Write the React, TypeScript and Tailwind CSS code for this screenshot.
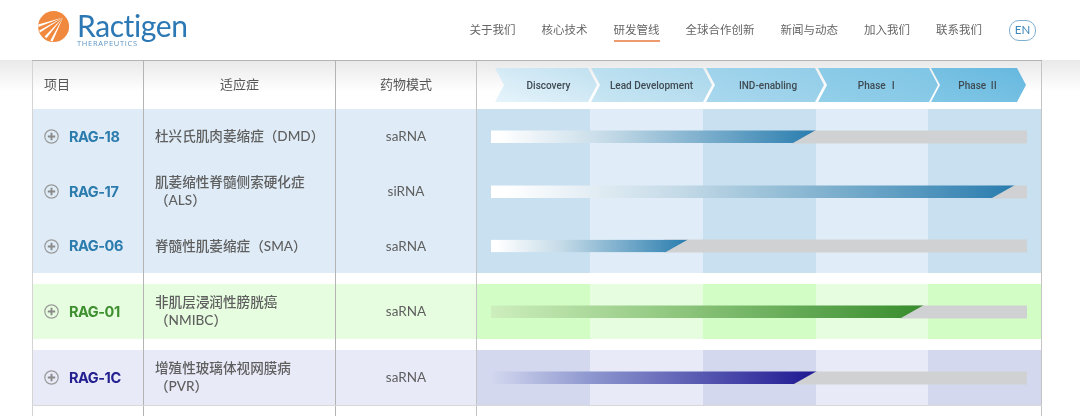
import React from "react";

const cjk = "font-['Lato','Noto_Sans_CJK_SC',sans-serif]";

function Logo() {
  return (
    <svg width="32" height="32" viewBox="0 0 32 32" className="shrink-0">
      <circle cx="15.6" cy="15.6" r="15.5" fill="#f0883e" />
      <path d="M25 6.5 L0.2 13.6 L0.3 16 Z" fill="#fff" />
      <path d="M25 6.5 L1.2 19.4 L2 21.6 Z" fill="#fff" />
      <path d="M25 6.5 L6.6 25.6 L8.4 27.2 Z" fill="#fff" />
      <path d="M25 6.5 L12.4 29.6 L14.6 30.6 Z" fill="#fff" />
    </svg>
  );
}

function PlusIcon() {
  return (
    <svg width="15" height="15" viewBox="0 0 15 15" className="shrink-0">
      <circle cx="7.5" cy="7.5" r="6.7" fill="none" stroke="#9a9a9a" strokeWidth="1.2" />
      <path d="M7.5 3.8V11.2M3.8 7.5H11.2" stroke="#8a8a8a" strokeWidth="1.9" />
    </svg>
  );
}

const navItems = ["关于我们", "核心技术", "研发管线", "全球合作创新", "新闻与动态", "加入我们", "联系我们"];

function Header() {
  return (
    <header className="relative z-10 flex h-[60px] items-center justify-between bg-white pl-[38px] pr-[44px]">
      <div className="flex -translate-y-[1px] items-start gap-[7px]">
        <Logo />
        <div className="flex flex-col">
          <span className="h-[28px] text-[30px] leading-[28px] tracking-[-0.4px] text-[#2b78b5] font-['Lato',sans-serif]">Ractigen</span>
          <span className="text-[7.5px] leading-[8px] tracking-[0.7px] text-[#5d93c4] font-['Open_Sans',sans-serif]">THERAPEUTICS</span>
        </div>
      </div>
      <nav className="flex items-center gap-[26px] text-[11.5px] text-[#666] font-['Noto_Sans_CJK_SC',sans-serif]">
        {navItems.map((n) => (
          <span key={n} className={n === "研发管线" ? "flex h-[22px] translate-y-[1px] items-center border-b-2 border-[#ee9a6f]" : "flex h-[22px] items-center"}>
            {n}
          </span>
        ))}
        <span className="ml-[1px] flex h-[21px] w-[27px] items-center justify-center rounded-[10px] border border-[#7fb0d2] text-[11.5px] text-[#3d86b8] font-['Lato',sans-serif]">EN</span>
      </nav>
    </header>
  );
}

const stages = [
  { label: "Discovery", cls: "w-[102px] pl-[5px] bg-[linear-gradient(20deg,#e6f4fb,#c0e0f0)]", clip: "[clip-path:polygon(0_0,93px_0,100%_50%,93px_100%,0_100%,9px_50%)]" },
  { label: "Lead Development", cls: "w-[121px] -ml-[6px] bg-[linear-gradient(20deg,#c9e6f3,#a9d7ec)]", clip: "[clip-path:polygon(0_0,112px_0,100%_50%,112px_100%,0_100%,9px_50%)]" },
  { label: "IND-enabling", cls: "w-[118px] -ml-[6px] pl-[6px] bg-[linear-gradient(20deg,#a9d8ee,#92cde8)]", clip: "[clip-path:polygon(0_0,109px_0,100%_50%,109px_100%,0_100%,9px_50%)]" },
  { label: "Phase Ⅰ", cls: "w-[120px] -ml-[6px] bg-[linear-gradient(20deg,#93cfe9,#7fc5e5)]", clip: "[clip-path:polygon(0_0,111px_0,100%_50%,111px_100%,0_100%,9px_50%)]" },
  { label: "Phase Ⅱ", cls: "w-[95px] -ml-[7px] pt-[1px] bg-[linear-gradient(20deg,#82c7e6,#66b8df)]", clip: "[clip-path:polygon(0_0,86px_0,100%_50%,86px_100%,0_100%,9px_50%)]" },
];

const cols = "grid-cols-[111px_192px_141px_566px]";

function HeadCells() {
  return (
    <div className={`grid h-[49px] ${cols} border-t border-[#b4b4b4] text-[13px] text-[#555] ${cjk}`}>
      <div className="flex items-center border-l border-[#d4d4d4] pl-[11px]">项目</div>
      <div className="flex items-center justify-center border-l border-[#b4b4b4]">适应症</div>
      <div className="flex items-center justify-center border-l border-[#b4b4b4]">药物模式</div>
      <div className="flex items-center border-x border-[#c4c4c4] pl-[18px]">
        {stages.map((s) => (
          <div key={s.label} className={`flex h-[34px] items-center justify-center text-[10px] font-medium text-[#3f4a52] font-['Roboto','Noto_Sans_CJK_SC',sans-serif] ${s.cls} ${s.clip}`}>
            {s.label}
          </div>
        ))}
      </div>
    </div>
  );
}

type Theme = { left: string; dark: string; light: string; name: string; grad: string };

const blue: Theme = { left: "bg-[#dfecf7]", dark: "bg-[#c8e0f0]", light: "bg-[#e0edf8]", name: "text-[#2b7bad]", grad: "bg-[linear-gradient(90deg,#ffffff_3%,#c4dae7_36%,#287cae_100%)]" };
const green: Theme = { left: "bg-[#e6fde0]", dark: "bg-[#d2fdc5]", light: "bg-[#e6fde0]", name: "text-[#3e8f2f]", grad: "bg-[linear-gradient(90deg,#cdeebd,#93c982_40%,#378c2c_100%)]" };
const purple: Theme = { left: "bg-[#e8eaf8]", dark: "bg-[#d3d8ef]", light: "bg-[#e8eaf8]", name: "text-[#24208f]", grad: "bg-[linear-gradient(90deg,#d3d8ef,#8f98cf_30%,#1e1792_100%)]" };

function Row({ theme, name, lines, mode, fill, h }: { theme: Theme; name: string; lines: string[]; mode: string; fill: number; h: string }) {
  return (
    <div className={`grid ${cols} ${h} text-[#5f5f5f] ${cjk}`}>
      <div className={`flex items-center gap-[10px] border-l border-[#d4d4d4] pl-[11px] ${theme.left}`}>
        <PlusIcon />
        <span className={`text-[14.5px] font-bold tracking-[-0.45px] font-['Inter',sans-serif] ${theme.name}`}>{name}</span>
      </div>
      <div className={`flex flex-col justify-center border-l border-[#b4b4b4] pb-[1px] pl-[11px] text-[13.6px] font-medium leading-[18px] ${theme.left}`}>
        {lines.map((l) => (
          <div key={l}>{l}</div>
        ))}
      </div>
      <div className={`flex items-center justify-center border-l border-[#b4b4b4] text-[13.5px] ${theme.left}`}>{mode}</div>
      <div className="relative grid grid-cols-[113px_113px_113px_112px_1fr] border-x border-[#c4c4c4]">
        <div className={theme.dark} />
        <div className={theme.light} />
        <div className={theme.dark} />
        <div className={theme.light} />
        <div className={theme.dark} />
        <div className="absolute left-[14px] top-1/2 h-[13px] w-[536px] -translate-y-1/2">
          <div className="absolute inset-y-0 right-0 bg-[#d0d1d2]" style={{ left: fill - 24 }} />
          <div
            className={`absolute inset-y-0 left-0 [clip-path:polygon(0_0,100%_0,calc(100%-23px)_100%,0_100%)] ${theme.grad}`}
            style={{ width: fill }}
          />
        </div>
      </div>
    </div>
  );
}

function Gap({ h }: { h: string }) {
  return (
    <div className={`grid ${cols} ${h}`}>
      <div className="border-l border-[#d4d4d4]" />
      <div className="border-l border-[#b4b4b4]" />
      <div className="border-l border-[#b4b4b4]" />
      <div className="border-x border-[#c4c4c4]" />
    </div>
  );
}

export default function App() {
  return (
    <div className="h-[416px] w-[1080px] overflow-hidden bg-white blur-[0.3px]">
      <Header />
      <main className="bg-[linear-gradient(#e9e9e9,#ffffff_32px)] pl-[32px]">
        <div className="w-[1010px]">
          <HeadCells />
          <Row theme={blue} name="RAG-18" lines={["杜兴氏肌肉萎缩症（DMD）"]} mode="saRNA" fill={325} h="h-[55px]" />
          <Row theme={blue} name="RAG-17" lines={["肌萎缩性脊髓侧索硬化症", "（ALS）"]} mode="siRNA" fill={524} h="h-[55px]" />
          <Row theme={blue} name="RAG-06" lines={["脊髓性肌萎缩症（SMA）"]} mode="saRNA" fill={197} h="h-[54px]" />
          <Gap h="h-[11px]" />
          <Row theme={green} name="RAG-01" lines={["非肌层浸润性膀胱癌", "（NMIBC）"]} mode="saRNA" fill={433} h="h-[55px]" />
          <Gap h="h-[11px]" />
          <Row theme={purple} name="RAG-1C" lines={["增殖性玻璃体视网膜病", "（PVR）"]} mode="saRNA" fill={326} h="h-[55px]" />
          <div className="border-t border-[#d8d8d8]">
            <Gap h="h-[12px]" />
          </div>
        </div>
      </main>
    </div>
  );
}
